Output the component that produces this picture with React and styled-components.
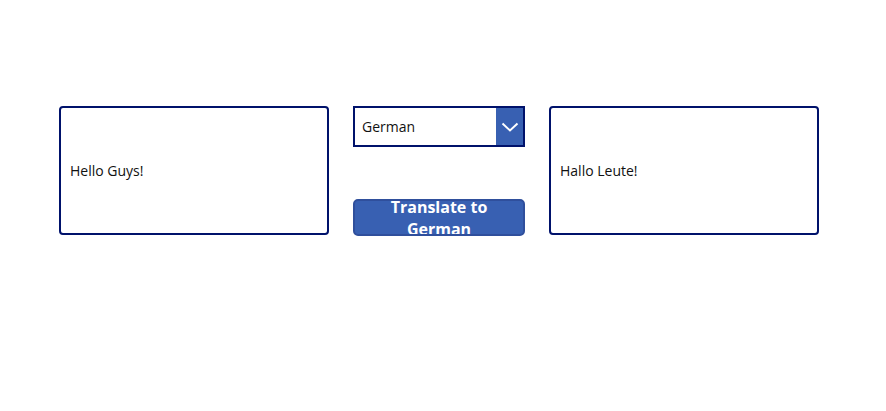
import React from 'react'
import styled, { createGlobalStyle } from 'styled-components'

const GlobalStyle = createGlobalStyle`
    body {
        margin: 0;
        background: #ffffff;
        font-family: "Open Sans", "Noto Sans", sans-serif;
    }
`

const Screen = styled.div`
    width: 886px;
    height: 411px;
    box-sizing: border-box;
    padding: 106px 0 0 59px;
    display: flex;
    align-items: flex-start;
    gap: 24px;
`

const TextBox = styled.div`
    width: 270px;
    height: 129px;
    box-sizing: border-box;
    border: 2px solid #00126b;
    border-radius: 4px;
    padding: 0 9px;
    display: flex;
    align-items: center;
    font-size: 14px;
    color: #111111;
`

const MiddleColumn = styled.div`
    width: 172px;
    display: flex;
    flex-direction: column;
    gap: 52px;
`

const Dropdown = styled.div`
    height: 41px;
    box-sizing: border-box;
    border: 2px solid #00126b;
    display: flex;
    align-items: stretch;
    font-size: 14px;
    color: #111111;
`

const DropdownValue = styled.div`
    flex: 1;
    display: flex;
    align-items: center;
    padding-left: 7px;
`

const Chevron = styled.div`
    width: 27px;
    background: #3860b2;
    display: flex;
    align-items: center;
    justify-content: center;
`

const TranslateButton = styled.button`
    height: 37px;
    box-sizing: border-box;
    border: 2px solid #2f4f9c;
    border-radius: 5px;
    background: #3860b2;
    color: #ffffff;
    font-family: "Open Sans", "Noto Sans", sans-serif;
    font-weight: 700;
    font-size: 16px;
    line-height: 22px;
    padding: 0 20px;
    display: flex;
    align-items: center;
    justify-content: center;
    overflow: hidden;
    text-align: center;
`

const App = () => {
    return (
        <>
            <GlobalStyle />
            <Screen>
                <TextBox>Hello Guys!</TextBox>
                <MiddleColumn>
                    <Dropdown>
                        <DropdownValue>German</DropdownValue>
                        <Chevron>
                            <svg width="18" height="10" viewBox="0 0 18 10">
                                <path d="M1.5 1.5 L9 8.5 L16.5 1.5" fill="none" stroke="#ffffff" strokeWidth="2" />
                            </svg>
                        </Chevron>
                    </Dropdown>
                    <TranslateButton>Translate to German</TranslateButton>
                </MiddleColumn>
                <TextBox>Hallo Leute!</TextBox>
            </Screen>
        </>
    )
}

export default App
